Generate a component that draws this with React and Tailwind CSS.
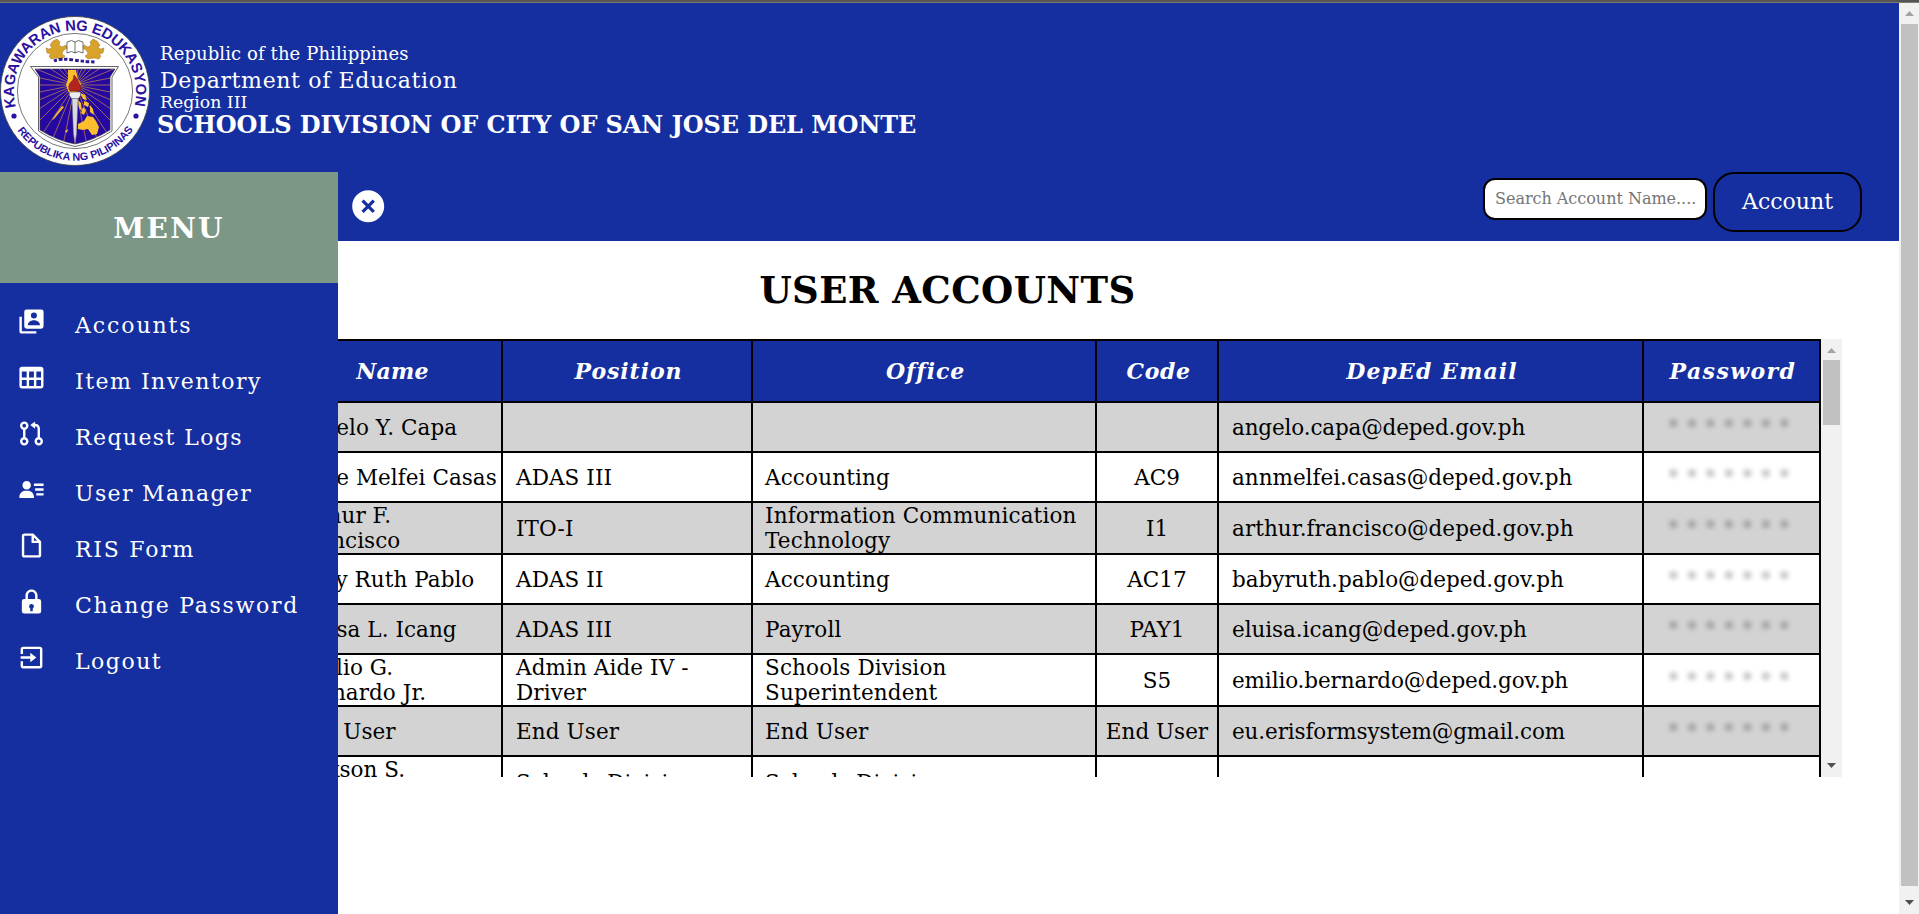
import {
  BiSolidUserAccount,
  BiTable,
  BiGitPullRequest,
  BiSolidUserDetail,
  BiFileBlank,
  BiSolidLock,
  BiSolidXCircle,
  BiExit,
} from 'react-icons/bi';

const menu = [
  { label: 'Accounts', icon: BiSolidUserAccount, spacing: 'tracking-[1.9px]' },
  { label: 'Item Inventory', icon: BiTable, spacing: 'tracking-[1.5px]' },
  { label: 'Request Logs', icon: BiGitPullRequest, spacing: 'tracking-[1.4px]' },
  { label: 'User Manager', icon: BiSolidUserDetail, spacing: 'tracking-[1.35px]' },
  { label: 'RIS Form', icon: BiFileBlank, spacing: 'tracking-[1.75px]' },
  { label: 'Change Password', icon: BiSolidLock, spacing: 'tracking-[1.7px]' },
  { label: 'Logout', icon: BiExit, spacing: 'tracking-[1.5px]' },
];

const headings = [
  { label: 'Name', spacing: 'tracking-[0.2px]' },
  { label: 'Position', spacing: 'tracking-[0.9px]' },
  { label: 'Office', spacing: 'tracking-[0.9px]' },
  { label: 'Code', spacing: 'tracking-[0.6px]' },
  { label: 'DepEd Email', spacing: 'tracking-[1.1px]' },
  { label: 'Password', spacing: 'tracking-[1.4px]' },
];

const rows = [
  { name: ['Angelo Y. Capa'], position: [], office: [], code: '', email: 'angelo.capa@deped.gov.ph', spacing: 'tracking-[-0.15px]' },
  { name: ['Anne Melfei Casas'], position: ['ADAS III'], office: ['Accounting'], code: 'AC9', email: 'annmelfei.casas@deped.gov.ph', spacing: 'tracking-normal' },
  { name: ['Arthur F.', 'Francisco'], position: ['ITO-I'], office: ['Information Communication', 'Technology'], code: 'I1', email: 'arthur.francisco@deped.gov.ph', spacing: 'tracking-[0.06px]' },
  { name: ['Baby Ruth Pablo'], position: ['ADAS II'], office: ['Accounting'], code: 'AC17', email: 'babyruth.pablo@deped.gov.ph', spacing: 'tracking-normal' },
  { name: ['Eluisa L. Icang'], position: ['ADAS III'], office: ['Payroll'], code: 'PAY1', email: 'eluisa.icang@deped.gov.ph', spacing: 'tracking-[-0.06px]' },
  { name: ['Emilio G.', 'Bernardo Jr.'], position: ['Admin Aide IV -', 'Driver'], office: ['Schools Division', 'Superintendent'], code: 'S5', email: 'emilio.bernardo@deped.gov.ph', spacing: 'tracking-[-0.12px]' },
  { name: ['End User'], position: ['End User'], office: ['End User'], code: 'End User', email: 'eu.erisformsystem@gmail.com', spacing: 'tracking-[-0.12px]' },
];

const columns = 'grid grid-cols-[222px_250px_344px_122px_425px_177px]';
const cell = 'flex flex-col justify-center whitespace-nowrap border-r-2 border-b-2 border-black';

function Lines({ lines }) {
  return lines.map((line) => <span key={line}>{line}</span>);
}

function Seal() {
  const rays = Array.from({ length: 32 }, (_, i) => (i * Math.PI) / 16);
  return (
    <svg className="h-[150px] w-[150px] shrink-0" viewBox="0 16 150 150">
      <defs>
        <path id="seal-top" d="M16 107 A61 61 0 1 1 134 107" />
        <path id="seal-bottom" d="M17.500 130.500 A70 70 0 0 0 132.500 130.500" />
        <clipPath id="shield">
          <path d="M35 69H115L110 77V130Q92 141 75 144Q58 141 40 130V77Z" />
        </clipPath>
      </defs>
      <circle cx="75" cy="91" r="74.5" fill="#fff" stroke="#444" strokeWidth="0.8" />
      <circle cx="75" cy="91" r="57.6" fill="#fff" stroke="#555" strokeWidth="0.8" />
      <g fill="#2c12a0" className="font-['Liberation_Sans',sans-serif] font-bold">
        <text fontSize="14.8">
          <textPath href="#seal-top" textLength="221">KAGAWARAN NG EDUKASYON</textPath>
        </text>
        <text fontSize="10.8">
          <textPath href="#seal-bottom" textLength="136">REPUBLIKA NG PILIPINAS</textPath>
        </text>
        <circle cx="14" cy="116" r="2.6" />
        <circle cx="136" cy="116" r="2.6" />
      </g>
      <g fill="#d9a22a" stroke="#8a6414" strokeWidth="0.4">
        <path d="M53 41l4-2 3 3-1 3 3 2 4-2 1 3-4 3-1 3 3 2-3 3-6-1-5 1-2-3 2-2-4-1-1-5 3 1 3-1-2-3z" />
        <path d="M97 41l-4-2-3 3 1 3-3 2-4-2-1 3 4 3 1 3-3 2 3 3 6-1 5 1 2-3-2-2 4-1 1-5-3 1-3-1 2-3z" />
      </g>
      <path d="M67 42q5-3 8 0q3-3 8 0V53q-5-3-8 0q-3-3-8 0zM75 42V53" fill="#fff" stroke="#333" strokeWidth="0.7" />
      <path d="M54 61q6-3 20-1t22 2" fill="none" stroke="#2c1a90" strokeWidth="3" strokeDasharray="3.5 1.8" />
      <path d="M30.500 66.500H118.500L112 77V131Q93 143 75 146.500Q57 143 38.500 131V77Z" fill="#fff" stroke="#555" strokeWidth="0.9" />
      <path d="M35 69H115L110 77V130Q92 141 75 144Q58 141 40 130V77Z" fill="#2508a0" stroke="#333" strokeWidth="0.6" />
      <g clipPath="url(#shield)">
        <g stroke="#b27b55" strokeWidth="0.8">
          {rays.map((a) => (
            <line key={a} x1="75" y1="85" x2={75 + 80 * Math.cos(a)} y2={85 + 80 * Math.sin(a)} />
          ))}
        </g>
        <g fill="#fbbf2d">
          <path d="M68 70h8l2 9 3 5-3 6-3 4 4 4-6-1-4-4-3-8 2-6z" />
          <path d="M80 93l5 2 2 5-4-1zM84 101l5 2-1 4-4-2zM78 100l3 3 1 8-3-3zM90 105l3 4 1 6-4-3zM83 107l3 3-2 5-3-2z" />
          <path d="M78 124l6-3 3-5 6 1 3 4 3 6-2 7-5 1-4-6-5 1-5-1z" />
          <path d="M64 107l-5 6-5 6-2 1 4-6 6-8z" />
          <path d="M65 131l3-2-1 4z" />
        </g>
      </g>
      <path d="M72 98h6l-1.500 36-1.500 9-1.500-9z" fill="#d9dbe0" stroke="#777" strokeWidth="0.5" />
      <path d="M69.500 92h11v3.500l-2 3h-7l-2-3z" fill="#eceef0" stroke="#555" strokeWidth="0.6" />
      <path d="M70 91q-3-5 1-9q3-2 3-7q4 4 5 8q3 4 1 8z" fill="#b3241f" stroke="#6b1512" strokeWidth="0.6" />
    </svg>
  );
}

function Arrow({ down }) {
  return (
    <svg className="h-[5px] w-[9px]" viewBox="0 0 9 5">
      {down ? <path d="M0 0H9L4.500 5Z" fill="#505050" /> : <path d="M0 5H9L4.500 0Z" fill="#a3a3a3" />}
    </svg>
  );
}

function Header() {
  return (
    <header className="flex h-[169px] bg-[#152fa0] pt-[13px] text-white">
      <Seal />
      <div className="ml-[7px] flex flex-col pt-[26px] whitespace-nowrap">
        <span className="ml-[3px] text-[18px] leading-6 tracking-[0.1px]">Republic of the Philippines</span>
        <span className="ml-[3px] text-[22px] leading-[29px] tracking-[0.65px]">Department of Education</span>
        <span className="ml-[3px] text-[17.300px] leading-[15px]">Region III</span>
        <span className="text-[24px] leading-[29px] font-bold tracking-[-0.1px]">
          SCHOOLS DIVISION OF CITY OF SAN JOSE DEL MONTE
        </span>
      </div>
    </header>
  );
}

function Toolbar() {
  return (
    <div className="flex h-[69px] items-start justify-between bg-[#152fa0] pr-[37px] pl-[349px]">
      <BiSolidXCircle className="mt-[15px] text-[38.400px] text-white" />
      <div className="flex gap-[6px]">
        <input
          className="mt-[6px] h-[42px] w-[224px] rounded-xl border-2 border-black bg-white pb-[2px] pl-[10px] text-[16px] tracking-[-0.02px] placeholder:text-[#757575]"
          placeholder="Search Account Name...."
        />
        <button className="h-[60px] w-[149px] rounded-[21px] border-2 border-black pb-[2px] text-[22px] text-white">
          Account
        </button>
      </div>
    </div>
  );
}

function Sidebar() {
  return (
    <aside className="absolute top-[169px] bottom-0 left-0 w-[338px] bg-[#152fa0] text-white">
      <div className="flex h-[111px] items-center justify-center bg-[#7d9786] pt-[2px] text-[28px] font-bold tracking-[2.300px]">
        MENU
      </div>
      <nav className="flex flex-col pt-[10px]">
        {menu.map(({ label, icon: Icon, spacing }) => (
          <div key={label} className="flex h-14 pl-[16.500px]">
            <Icon className="mt-[13.500px] mr-[29.500px] text-[29px]" />
            <span className={`mt-[5px] text-[22px] leading-[56px] ${spacing}`}>{label}</span>
          </div>
        ))}
      </nav>
    </aside>
  );
}

function AccountsTable() {
  return (
    <div className="ml-[279px] flex h-[438px] overflow-hidden">
      <div className="w-[1542px] border-t-2 border-l-2 border-black">
        <div className={`${columns} h-[62px] bg-[#152fa0] text-[22px] font-bold text-white italic`}>
          {headings.map(({ label, spacing }) => (
            <div key={label} className={`${cell} items-center pl-[3px] ${spacing}`}>
              {label}
            </div>
          ))}
        </div>
        <div className="text-[21.500px] leading-[25px] text-black">
          {rows.map((row) => (
            <div key={row.email} className={`${columns} min-h-[50px] odd:bg-[#d3d3d3]`}>
              <div className={`${cell} pl-[12px] tracking-[0.05px]`}><Lines lines={row.name} /></div>
              <div className={`${cell} pl-[13px] tracking-[0.1px]`}><Lines lines={row.position} /></div>
              <div className={`${cell} pl-[12px] tracking-[0.15px]`}><Lines lines={row.office} /></div>
              <div className={`${cell} items-center`}>{row.code}</div>
              <div className={`${cell} pl-[13px] ${row.spacing}`}>{row.email}</div>
              <div className={`${cell} pl-[24px]`}>
                <span className="tracking-[7.750px] opacity-35 blur-[2px]">*******</span>
              </div>
            </div>
          ))}
          <div className={columns}>
            <div className={`${cell} pl-[12px]`}><Lines lines={['Jackson S.', 'De Leon', 'Jr.']} /></div>
            <div className={`${cell} pl-[13px]`}><Lines lines={['Schools Division', 'Driver']} /></div>
            <div className={`${cell} pl-[12px]`}><Lines lines={['Schools Division', 'Superintendent']} /></div>
            <div className={cell} />
            <div className={cell} />
            <div className={cell} />
          </div>
        </div>
      </div>
      <div className="flex w-[21px] flex-col items-center bg-[#f1f1f1] pt-[9px] pb-[9px]">
        <Arrow />
        <div className="mt-[7px] h-[65px] w-[17px] bg-[#c1c1c1]" />
        <div className="mt-auto"><Arrow down /></div>
      </div>
    </div>
  );
}

export default function App() {
  return (
    <div className="flex h-[914px] w-[1919px] flex-col overflow-hidden bg-white font-['DejaVu_Serif',serif]">
      <div className="h-[3px] shrink-0 border-b border-[#7d7a70] bg-[#555]" />
      <div className="flex flex-1">
        <main className="relative w-[1899px]">
          <Header />
          <Toolbar />
          <h1 className="h-[98px] pr-1 text-center text-[37px] leading-[98px] font-bold tracking-[0.4px] text-black">
            USER ACCOUNTS
          </h1>
          <AccountsTable />
          <Sidebar />
        </main>
        <div className="flex w-5 flex-col items-center bg-[#f1f1f1] pt-[8px] pb-[9px]">
          <Arrow />
          <div className="mt-[8px] mb-auto h-[862px] w-[17px] bg-[#c1c1c1]" />
          <Arrow down />
        </div>
      </div>
    </div>
  );
}
